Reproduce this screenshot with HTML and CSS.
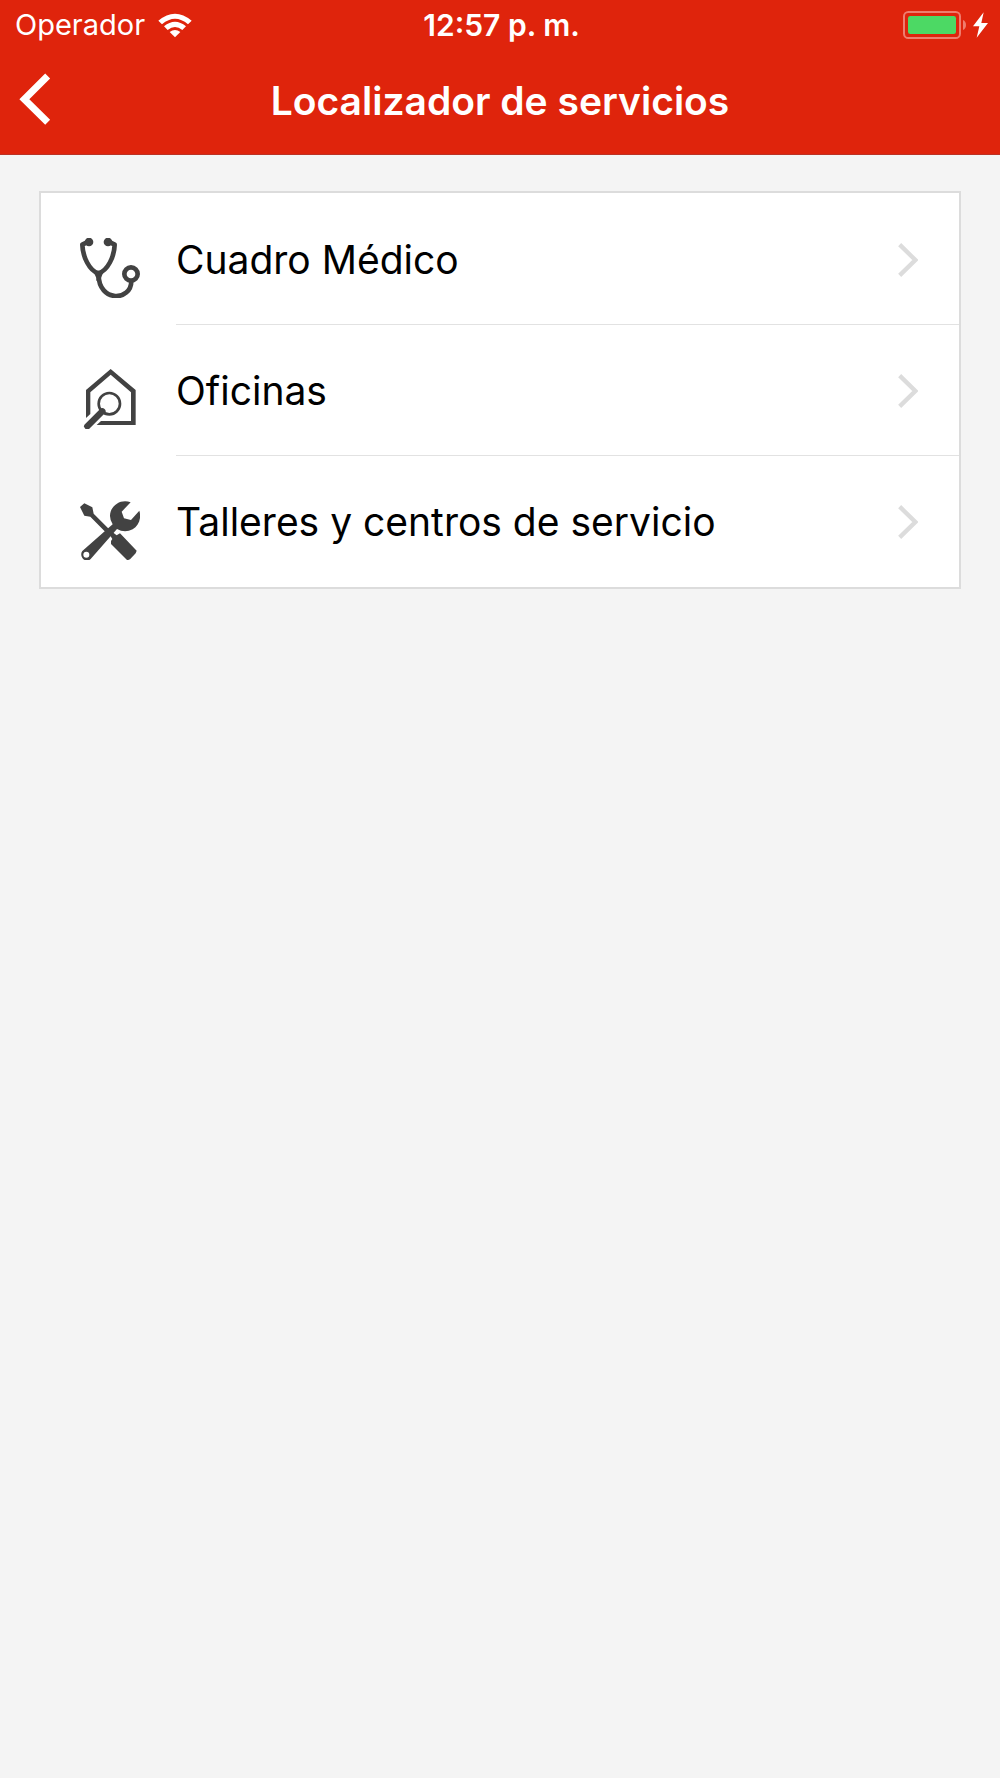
FILE: index.html
```html
<!DOCTYPE html>
<html lang="es">
<head>
<meta charset="utf-8">
<meta name="viewport" content="width=device-width, initial-scale=1">
<title>Localizador de servicios</title>
<link rel="stylesheet" href="styles.css">
</head>
<body>
<header class="header">
  <div class="status">
    <div class="status-left">
      <span>Operador</span>
      <svg class="wifi" viewBox="471 35 102 75" aria-hidden="true">
        <path d="M472 58Q522 16 572 58L561 69Q522 36 483 69Z"/>
        <path d="M489 75Q522 48 555 75L544 86Q522 68 500 86Z"/>
        <path d="M506 92Q522 80 538 92L522 108Z"/>
      </svg>
    </div>
    <span class="time">12:57 p. m.</span>
    <div class="status-right">
      <svg class="battery" viewBox="69 30 189 84" aria-hidden="true">
        <rect class="battery-shell" x="72" y="33" width="168" height="78" rx="13"/>
        <rect class="battery-level" x="84" y="45" width="144" height="54" rx="7"/>
        <path class="battery-cap" d="M249 57Q258 61 258 72T249 87Z"/>
      </svg>
      <svg class="bolt" viewBox="279 34 45 78" aria-hidden="true">
        <path d="M311 35L279 77H298L290 111L324 67H304Z"/>
      </svg>
    </div>
  </div>
  <div class="navbar">
    <button class="back" type="button" aria-label="Volver">
      <svg viewBox="57 218 96 156" aria-hidden="true"><path d="M143 227L73 297L143 366"/></svg>
    </button>
    <h1 class="title">Localizador de servicios</h1>
  </div>
</header>
<main class="content">
  <nav class="menu">
    <a class="row" href="#cuadro-medico">
      <svg class="icon" viewBox="30 36 180 180" aria-hidden="true">
        <circle class="solid" cx="57" cy="48" r="13"/>
        <circle class="solid" cx="114" cy="48" r="13"/>
        <path class="line tube" d="M57 46L37 56C38 92 58 134 85 142C113 134 133 92 134 56L114 46"/>
        <path class="solid" d="M68 131Q85 142 103 131L93 156V164H79V156Z"/>
        <path class="line tube" d="M86 148C86 228 184 228 184 164"/>
        <circle class="line tube" cx="183" cy="144" r="20"/>
      </svg>
      <span class="label">Cuadro Médico</span>
      <svg class="chevron" viewBox="114 184 60 102" aria-hidden="true"><path d="M119 189L166 235L119 281"/></svg>
    </a>
    <a class="row" href="#oficinas">
      <svg class="icon" viewBox="30 54 180 180" aria-hidden="true">
        <path class="solid" d="M48 201V117L122 54L197 117V222H80L93 210H183V124L122 71L61 124V189Z"/>
        <circle class="line lens" cx="118" cy="158" r="32"/>
        <path class="line handle" d="M97 181L52 226"/>
      </svg>
      <span class="label">Oficinas</span>
      <svg class="chevron" viewBox="114 184 60 102" aria-hidden="true"><path d="M119 189L166 235L119 281"/></svg>
    </a>
    <a class="row" href="#talleres">
      <svg class="icon" viewBox="30 57 180 180" aria-hidden="true">
        <path class="solid" d="M30 78L43 67L67 79L71 98L116 143L107 154L61 107L43 104Z"/>
        <path class="solid" d="M118 160L126 152L140 163L150 157L200 209L197 217L180 235L172 238L123 189V180L127 174Z"/>
        <path class="solid" fill-rule="evenodd" d="M182 64C155 52 120 72 120 105Q120 117 128 130L37 210C29 220 36 239 52 239Q57 239 62 234L141 144Q164 157 188 145C206 134 215 112 208 89L183 117L162 112L155 92ZM49 212A9 9 0 1 1 49 230A9 9 0 1 1 49 212Z"/>
      </svg>
      <span class="label">Talleres y centros de servicio</span>
      <svg class="chevron" viewBox="114 184 60 102" aria-hidden="true"><path d="M119 189L166 235L119 281"/></svg>
    </a>
  </nav>
</main>
</body>
</html>
```
FILE: styles.css
```css
* { box-sizing: border-box; }

body {
  margin: 0;
  min-height: 100vh;
  background: #f4f4f4;
  color: #000;
  font-family: Inter, "Liberation Sans", sans-serif;
}

svg { display: block; flex: none; }

.header {
  background: #df240c;
  color: #fff;
  border-bottom: 1px solid #bb3325;
}

.status {
  display: grid;
  grid-template-columns: 1fr auto 1fr;
  align-items: center;
  height: 50px;
  padding: 0 12px 0 15px;
  font-size: 29px;
  line-height: 36px;
}

.status-left,
.status-right { display: flex; align-items: center; }
.status-left { gap: 13px; }
.status-right { gap: 7px; justify-content: flex-end; }
.time { font-size: 30px; font-weight: 600; }

.wifi { width: 34px; height: 25px; fill: #fff; }
.battery { width: 63px; height: 28px; }
.battery-shell { fill: none; stroke: #ef7d6e; stroke-width: 6; }
.battery-level { fill: #4cd964; }
.battery-cap { fill: #ef7d6e; }
.bolt { width: 15px; height: 26px; fill: #fff; }

.navbar {
  display: grid;
  grid-template-columns: 72px 1fr 72px;
  align-items: center;
  height: 104px;
  padding-bottom: 6px;
}

.back {
  height: 72px;
  padding: 0 0 0 19px;
  border: 0;
  background: none;
  cursor: pointer;
}
.back svg { width: 32px; height: 52px; fill: none; stroke: #fff; stroke-width: 21; }

.title {
  margin: 0;
  padding-top: 4px;
  font-size: 39px;
  line-height: 48px;
  font-weight: 600;
  text-align: center;
}

.content { padding: 36px 39px; }

.menu {
  padding-top: 1px;
  background: #fff;
  border: 2px solid #dcdcdc;
}

.row {
  display: grid;
  grid-template-columns: 60px 1fr 20px;
  column-gap: 36px;
  align-items: center;
  height: 131px;
  padding: 0 41px 0 39px;
  color: inherit;
  text-decoration: none;
  background: linear-gradient(#e2e2e2, #e2e2e2) 135px 100% / 100% 1px no-repeat;
}
.row:last-child { background: none; }

.label { font-size: 39px; line-height: 48px; }

.icon { width: 60px; height: 60px; margin-top: 16px; }
.solid { fill: #424242; }
.line { fill: none; stroke: #424242; }
.tube { stroke-width: 14; stroke-linejoin: round; }
.lens { stroke-width: 8; }
.handle { stroke-width: 19; stroke-linecap: round; }

.chevron { width: 20px; height: 34px; fill: none; stroke: #dcdcdc; stroke-width: 13; }
```
